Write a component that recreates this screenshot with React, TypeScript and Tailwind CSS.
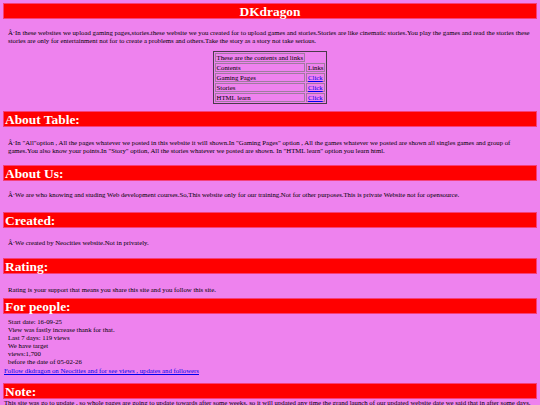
import React from "react";

const serif = { fontFamily: '"Liberation Serif", "Times New Roman", serif' };

function Bar({ children, center = false, className = "" }: { children: React.ReactNode; center?: boolean; className?: string }) {
  return (
    <div
      className={`h-[16px] border border-[#f5407a] bg-[#ff0000] px-[1px] text-[13.4px] font-bold leading-[15px] text-white ${center ? "text-center" : ""} ${className}`}
    >
      {children}
    </div>
  );
}

const rows = [
  ["Gaming Pages", "Click"],
  ["Stories", "Click"],
  ["HTML learn", "Click"],
];

const cell = "h-[9px] whitespace-nowrap border border-[#a07aa0] px-[1px] py-0 leading-[7px]";

export default function App() {
  return (
    <div className="min-h-[405px] w-[540px] overflow-hidden bg-[#ee82ee] px-[3px] pt-[3px] text-[6.75px] leading-[8px] text-black" style={serif}>
      <Bar center>DKdragon</Bar>

      <p className="mt-[10px] pl-[5px]">
        Â·In these websites we upload gaming pages,stories.these website we you created for to upload games and stories.Stories are like cinematic stories.You play the games and read the stories these stories are only for entertainment not for to create a problems and others.Take the story as a story not take serious.
      </p>

      <div className="mt-[6px] flex justify-center">
        <table className="w-[110px] border-separate border border-[#4a3a4a] [border-spacing:1px]">
          <tbody>
            <tr>
              <td className={cell}>These are the contents and links</td>
            </tr>
            <tr>
              <td className={cell}>Contents</td>
              <td className={cell}>Links</td>
            </tr>
            {rows.map(([label, link]) => (
              <tr key={label}>
                <td className={`${cell} w-[88px]`}>{label}</td>
                <td className={cell}>
                  <a href="#" className="text-[#0000ee] underline">{link}</a>
                </td>
              </tr>
            ))}
          </tbody>
        </table>
      </div>

      <Bar className="mt-[7px]">About Table:</Bar>
      <p className="mt-[12px] pl-[5px]">
        Â·In "All"option , All the pages whatever we posted in this website it will shown.In "Gaming Pages" option , All the games whatever we posted are shown all singles games and group of games.You also know your points.In "Story" option, All the stories whatever we posted are shown. In "HTML learn" option you learn html.
      </p>

      <Bar className="mt-[10px]">About Us:</Bar>
      <p className="mt-[10px] pl-[5px]">
        Â·We are who knowing and studing Web development courses.So,This website only for our training.Not for other purposes.This is private Website not for opensource.
      </p>

      <Bar className="mt-[13px]">Created:</Bar>
      <p className="mt-[11px] pl-[5px]">Â·We created by Neocities website.Not in privately.</p>

      <Bar className="mt-[11px]">Rating:</Bar>
      <p className="mt-[12px] pl-[5px]">Rating is your support that means you share this site and you follow this site.</p>

      <Bar className="mt-[4px]">For people:</Bar>
      <div className="mt-[4px] pl-[5px]">
        <div>Start date: 16-09-25</div>
        <div>View was fastly increase thank for that.</div>
        <div>Last 7 days: 119 views</div>
        <div>We have target</div>
        <div>views:1,700</div>
        <div>before the date of 05-02-26</div>
      </div>
      <div className="mt-[1px] pl-[1px]">
        <a href="#" className="text-[#0000ee] underline">Follow dkdragon on Neocities and for see views , updates and followers</a>
      </div>

      <Bar className="mt-[8px]">Note:</Bar>
      <p className="pl-[1px]">
        This site was go to update , so whole pages are going to update towards after some weeks. so it will updated any time the grand launch of our updated website date we said that in after some days.
      </p>
    </div>
  );
}
